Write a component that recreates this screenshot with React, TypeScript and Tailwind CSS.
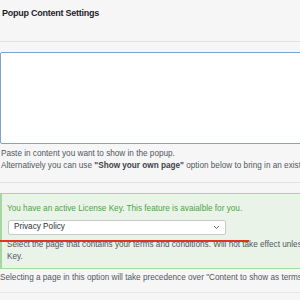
export default function App() {
  return (
    <div className="h-[300px] w-[300px] overflow-hidden bg-[#f6f6f6] font-['Liberation_Sans',Arial,sans-serif] text-[#3c434a]">
      <div className="w-[460px]">
        <h2 className="pl-[2px] pt-[7px] text-[9px] font-bold leading-[12px] tracking-[-0.25px] text-[#1d2327]">
          Popup Content Settings
        </h2>
        <div className="mt-[22px] border-t border-[#e2e2e2]" />
        <textarea
          className="mt-[10px] block h-[92px] w-full resize-none rounded-[2px] border border-[#7fa2d0] bg-white outline-none"
          defaultValue=""
        />
        <p className="mt-[4px] pl-[1px] text-[8.2px] leading-[11.5px] text-[#50575e]">
          Paste in content you want to show in the popup.
          <br />
          Alternatively you can use <b className="text-[#3c434a]">"Show your own page"</b> option below to bring in an existing page.
        </p>
        <div className="mt-[11px] border-t border-[#e2e2e2]" />
        <div className="mt-[10px] border border-[#a6d6a1] border-l-[2px] bg-[#eaf3e8] pb-[5px] pl-[5px] pt-[9px]">
          <p className="text-[8.2px] leading-[12px] text-[#4aa545]">
            You have an active License Key. This feature is avaialble for you.
          </p>
          <div className="relative mt-[5px]">
            <div className="ml-[1px] flex h-[15px] w-[218px] items-center justify-between rounded-[2px] border border-[#c9c9c9] bg-white pl-[5px] pr-[5px] text-[8.2px] text-[#2c3338]">
              <span>Privacy Policy</span>
              <svg width="7" height="5" viewBox="0 0 7 5" fill="none" stroke="#6b6b6b" strokeWidth="1">
                <path d="M1 1l2.5 2.5L6 1" />
              </svg>
            </div>
            <div className="absolute left-[-7px] top-[20px] h-[2px] w-[249px] bg-[#e2331f]" />
          </div>
          <p className="mt-[4px] w-[415px] text-[8.2px] leading-[12px] text-[#50575e]">
            Select the page that contains your terms and conditions. Will not take effect unless you have an active License Key.
          </p>
        </div>
        <p className="mt-[3px] text-[8.2px] leading-[12px] text-[#50575e]">
          Selecting a page in this option will take precedence over "Content to show as terms"
        </p>
        <div className="mt-[8px] border-t border-[#e6e6e6]" />
      </div>
    </div>
  )
}
